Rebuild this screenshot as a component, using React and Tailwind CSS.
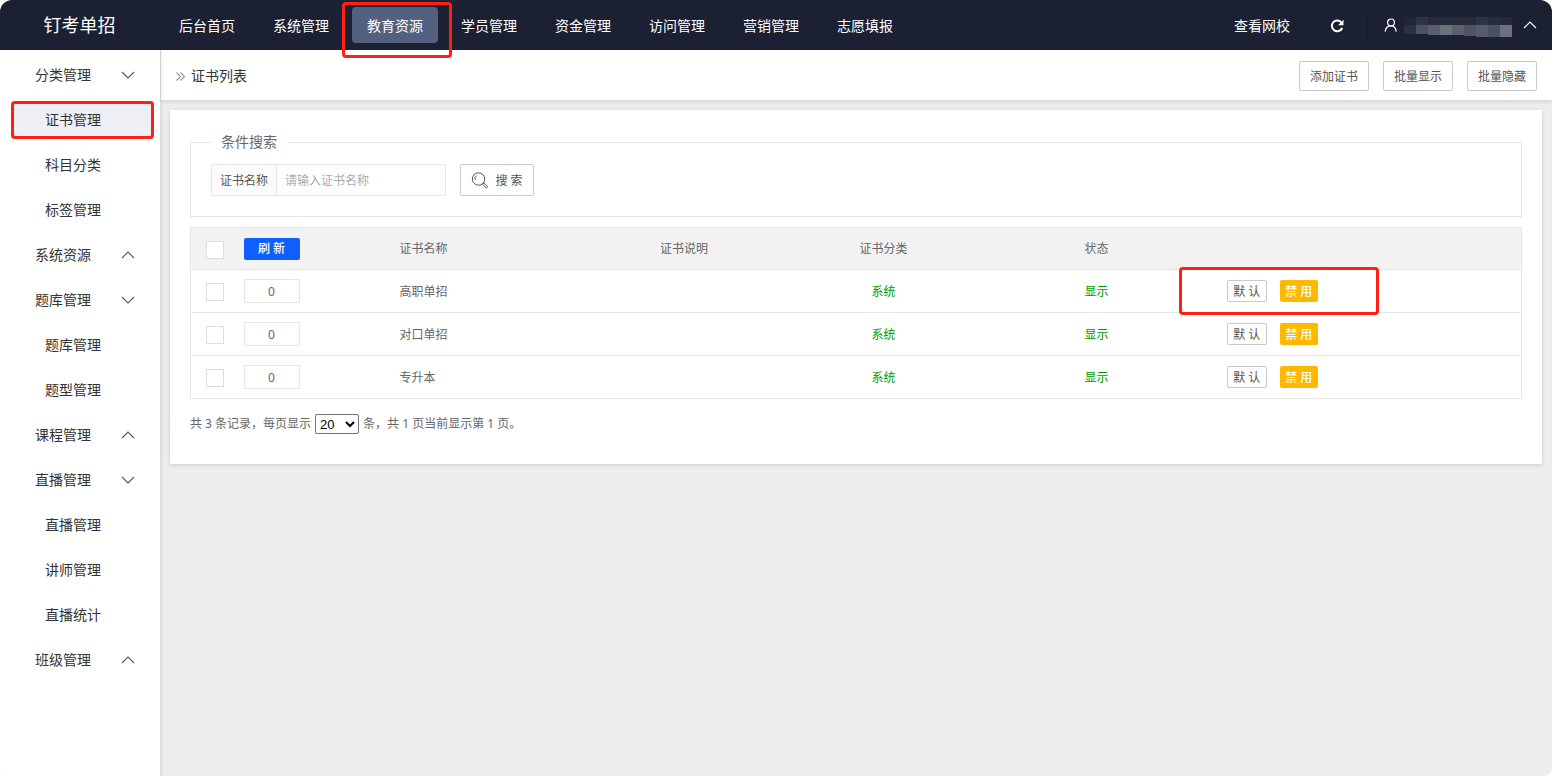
import { clsx } from "clsx";

const topNav = [
  "后台首页",
  "系统管理",
  "教育资源",
  "学员管理",
  "资金管理",
  "访问管理",
  "营销管理",
  "志愿填报",
];

const sideNav = [
  { title: "分类管理", open: true, items: ["证书管理", "科目分类", "标签管理"] },
  { title: "系统资源", open: false, items: [] },
  { title: "题库管理", open: true, items: ["题库管理", "题型管理"] },
  { title: "课程管理", open: false, items: [] },
  { title: "直播管理", open: true, items: ["直播管理", "讲师管理", "直播统计"] },
  { title: "班级管理", open: false, items: [] },
];

const rows = [
  { name: "高职单招", category: "系统", status: "显示", marked: true },
  { name: "对口单招", category: "系统", status: "显示" },
  { name: "专升本", category: "系统", status: "显示" },
];

function Chevron({ up, className }) {
  return (
    <svg
      className={clsx("h-2 w-3.5 shrink-0", className)}
      viewBox="0 0 14 8"
      fill="none"
      stroke="currentColor"
      strokeWidth="1.1"
      aria-hidden="true"
    >
      <path d={up ? "M1 7l6-6 6 6" : "M1 1l6 6 6-6"} />
    </svg>
  );
}

function Marker({ className }) {
  return (
    <span
      className={clsx(
        "pointer-events-none absolute z-20 rounded-sm border-3 border-[#ff1f14]",
        className
      )}
    />
  );
}

// Pixelated account name: [x, upper colour, lower colour, lower height]
const mosaic = [
  [0, "#222639", "#2b3043", 9],
  [12, "#2d3246", "#4c5060", 9],
  [24, "#272b3d", "#5c5d6c", 10],
  [36, "#272c3e", "#69747a", 10],
  [48, "#262b3a", "#5a636d", 10],
  [60, "#262b3a", "#55515f", 11],
  [72, "#2c3348", "#545c6d", 12],
  [84, "#272c3f", "#4c5061", 12],
  [96, "#252a3a", "#706f7c", 12],
];

function Header() {
  return (
    <header className="relative z-10 flex h-[50px] rounded-t-xl bg-[#1c2033] text-sm text-white">
      <div className="flex w-40 shrink-0 items-center justify-center border-r border-[#191c2c] text-lg">
        钉考单招
      </div>
      <nav className="flex flex-1 items-center gap-2 pl-1">
        {topNav.map((label) => (
          <a
            key={label}
            href="#"
            className={clsx(
              "relative flex h-9 items-center rounded-sm px-[15px] pt-0.5 whitespace-nowrap",
              label === "教育资源" && "bg-[#536080]"
            )}
          >
            {label}
            {label === "教育资源" && (
              <Marker className="-top-[5px] -right-3.5 -bottom-[15px] -left-2.5" />
            )}
          </a>
        ))}
      </nav>
      <div className="flex items-center">
        <a
          href="#"
          className="flex h-8 w-24 items-center border-l border-[#171a29] pt-0.5 pl-[15px]"
        >
          查看网校
        </a>
        <button
          type="button"
          aria-label="刷新页面"
          className="flex h-8 w-[54px] items-center border-x border-[#171a29] pt-0.5 pl-[15px]"
        >
          <svg className="size-3.5" viewBox="0 0 14 14" aria-hidden="true">
            <path
              d="M11.6 3.6A5.4 5.4 0 1 0 12.2 9"
              fill="none"
              stroke="currentColor"
              strokeWidth="2"
            />
            <path d="M13.5.8v5.4H8.1z" fill="currentColor" />
          </svg>
        </button>
        <button type="button" aria-label="账户" className="flex h-8 items-center pr-[15px] pl-4">
          <svg
            className="size-3.5"
            viewBox="0 0 14 14"
            fill="none"
            stroke="currentColor"
            strokeWidth="1.2"
            aria-hidden="true"
          >
            <circle cx="7" cy="4.4" r="3.4" />
            <path d="M1.2 13.6C1.6 9.6 4 7.8 7 7.8s4.8 2 5.2 5.8" />
          </svg>
          <svg className="mt-1 ml-1.5 h-5 w-[108px]" viewBox="0 0 108 20" aria-hidden="true">
            {mosaic.map(([x, upper, lower, height]) => (
              <g key={x}>
                <rect x={x} y="0" width="12" height="8" fill={upper} />
                <rect x={x} y="8" width="12" height={height} fill={lower} />
              </g>
            ))}
          </svg>
          <Chevron up className="ml-[11px]" />
        </button>
      </div>
    </header>
  );
}

function Sidebar() {
  return (
    <aside className="relative w-40 shrink-0 bg-white pt-0.5 text-sm text-[#333] shadow-[1px_0_4px_rgba(0,0,0,0.12)]">
      {sideNav.map((group) => (
        <section key={group.title}>
          <button
            type="button"
            className="flex h-[45px] w-full items-center justify-between pr-[25px] pl-[35px]"
          >
            {group.title}
            <Chevron up={!group.open} className="text-[#555]" />
          </button>
          {group.items.map((item) => {
            const active = item === "证书管理";
            return (
              <div key={item} className="flex h-[45px] items-center pr-1.5 pl-[11px]">
                <a
                  href="#"
                  className={clsx(
                    "relative flex h-[38px] flex-1 items-center pl-[34px]",
                    active && "bg-[#eeeff4]"
                  )}
                >
                  {item}
                  {active && <Marker className="inset-0" />}
                </a>
              </div>
            );
          })}
        </section>
      ))}
    </aside>
  );
}

function OutlineButton({ className, children }) {
  return (
    <button
      type="button"
      className={clsx(
        "flex items-center justify-center rounded-xs border border-[#c9c9c9] bg-white pt-px text-xs text-[#555]",
        className
      )}
    >
      {children}
    </button>
  );
}

function TitleBar() {
  return (
    <div className="flex h-[50px] items-center justify-between bg-white pt-0.5 pr-[15px] pl-[15px] shadow-[0_1px_4px_rgba(0,0,0,0.15)]">
      <h1 className="flex items-center gap-1.5 text-sm leading-5 text-[#333]">
        <svg
          className="size-[9px]"
          viewBox="0 0 9 9"
          fill="none"
          stroke="#999"
          strokeWidth="1.1"
          aria-hidden="true"
        >
          <path d="M.5.5l4 4-4 4M4.5.5l4 4-4 4" />
        </svg>
        证书列表
      </h1>
      <div className="flex gap-3.5">
        <OutlineButton className="h-[30px] w-[70px]">添加证书</OutlineButton>
        <OutlineButton className="h-[30px] w-[70px]">批量显示</OutlineButton>
        <OutlineButton className="h-[30px] w-[70px]">批量隐藏</OutlineButton>
      </div>
    </div>
  );
}

function SearchForm() {
  return (
    <fieldset className="border border-[#e6e6e6] px-5 pb-5">
      <legend className="px-2.5 text-sm leading-5 text-[#666]">条件搜索</legend>
      <div className="flex gap-3.5 pt-3">
        <div className="flex h-8 rounded-xs border border-[#e6e6e6] text-xs">
          <label
            htmlFor="cert-name"
            className="flex w-[65px] items-center justify-center border-r border-[#e6e6e6] bg-[#fbfbfb] pt-0.5 text-[#555]"
          >
            证书名称
          </label>
          <input
            id="cert-name"
            type="text"
            placeholder="请输入证书名称"
            className="w-[168px] px-2 pt-0.5 outline-none placeholder:text-[#aaa]"
          />
        </div>
        <OutlineButton className="h-8 w-[74px] gap-1.5">
          <svg
            className="size-[18px]"
            viewBox="0 0 18 18"
            fill="none"
            stroke="#555"
            strokeWidth="1"
            aria-hidden="true"
          >
            <circle cx="7.5" cy="7" r="6.2" />
            <path d="M4.2 7.9A3.6 3.6 0 0 1 5.4 3.7M12 11.6l1.2-.6 3.6 3.6-1.4 1.6-3.4-3.6z" />
          </svg>
          搜 索
        </OutlineButton>
      </div>
    </fieldset>
  );
}

function Check({ label }) {
  return (
    <input
      type="checkbox"
      aria-label={label}
      className="mt-0.5 block size-[18px] appearance-none border border-[#ddd] bg-white"
    />
  );
}

function CertTable() {
  return (
    <table className="mt-2.5 w-full table-fixed border border-[#e6e6e6] text-xs text-[#666]">
      <colgroup>
        <col className="w-[39px]" />
        <col className="w-[155px]" />
        <col className="w-[15%]" />
        <col className="w-[15%]" />
        <col className="w-[15%]" />
        <col className="w-[17%]" />
        <col />
      </colgroup>
      <thead>
        <tr className="h-[42px] bg-[#f2f2f2]">
          <th className="pl-[15px]">
            <Check label="全选" />
          </th>
          <th className="pl-3.5 text-left">
            <button
              type="button"
              className="block h-[22px] w-14 rounded-xs bg-[#0f5fff] pt-px font-medium text-white"
            >
              刷 新
            </button>
          </th>
          <th className="pl-[15px] text-left font-normal">证书名称</th>
          <th className="font-normal">证书说明</th>
          <th className="font-normal">证书分类</th>
          <th className="font-normal">状态</th>
          <th />
        </tr>
      </thead>
      <tbody>
        {rows.map((row) => (
          <tr key={row.name} className="h-[43px] border-t border-[#e6e6e6]">
            <td className="pl-[15px]">
              <Check label={row.name} />
            </td>
            <td className="pl-3.5">
              <input
                type="text"
                defaultValue="0"
                aria-label={`${row.name}排序`}
                className="block h-6 w-14 border border-[#e6e6e6] text-center outline-none"
              />
            </td>
            <td className="pt-0.5 pl-[15px]">{row.name}</td>
            <td />
            <td className="pt-0.5 text-center text-[#009a00]">{row.category}</td>
            <td className="pt-0.5 text-center text-[#009a00]">{row.status}</td>
            <td className="pl-[17px]">
              <div className="relative flex w-fit gap-[13px]">
                <OutlineButton className="h-[22px] w-10">默 认</OutlineButton>
                <button
                  type="button"
                  className="h-[22px] w-[38px] rounded-xs bg-[#ffb800] pt-px font-medium text-white"
                >
                  禁 用
                </button>
                {row.marked && (
                  <Marker className="-top-[13px] -right-[61px] -bottom-[13px] -left-12" />
                )}
              </div>
            </td>
          </tr>
        ))}
      </tbody>
    </table>
  );
}

function Pager() {
  return (
    <div className="mt-[15px] flex items-center gap-1 text-xs leading-5 text-[#666]">
      <label htmlFor="page-size">共 3 条记录，每页显示</label>
      <select
        id="page-size"
        defaultValue="20"
        className="h-5 w-11 rounded-xs border border-[#767676] bg-white font-['Liberation_Sans',sans-serif] text-[13px] leading-4 text-black"
      >
        <option>20</option>
        <option>50</option>
        <option>100</option>
      </select>
      <span>条，共 1 页当前显示第 1 页。</span>
    </div>
  );
}

export default function App() {
  return (
    <div
      lang="zh-CN"
      className="flex min-h-screen flex-col font-['Noto_Sans','Noto_Sans_CJK_SC',sans-serif]"
    >
      <Header />
      <div className="flex flex-1 overflow-hidden rounded-b-lg bg-[#ededed]">
        <Sidebar />
        <main className="min-w-0 flex-1 pl-px">
          <TitleBar />
          <div className="mt-2.5 mr-2.5 ml-[9px] bg-white px-5 pt-[22px] pb-[30px] shadow-[0_1px_4px_rgba(0,0,0,0.15)]">
            <SearchForm />
            <CertTable />
            <Pager />
          </div>
        </main>
      </div>
    </div>
  );
}
